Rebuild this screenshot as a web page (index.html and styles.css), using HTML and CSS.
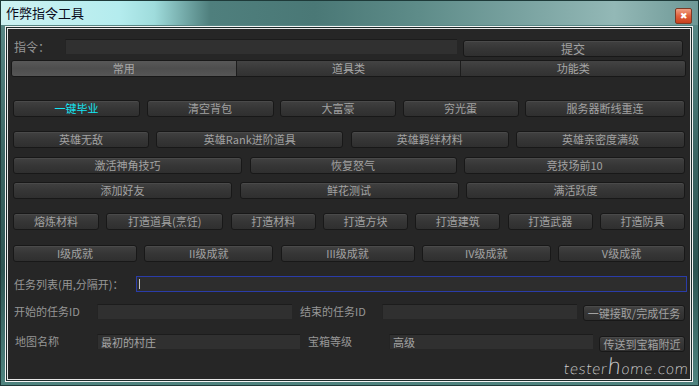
FILE: index.html
```html
<!DOCTYPE html>
<html>
<head>
    <title>作弊指令工具</title>
    <link rel="stylesheet" href="styles.css">
</head>
<body>
<div class="window">
    <div class="titlebar">
        <span class="title">作弊指令工具</span>
        <span class="close">&#x2716;</span>
    </div>
    <div class="frame">
        <div class="content">
            <div class="cmd-row">
                <label class="cmd-label">指令：</label>
                <div class="field cmd-input"></div>
                <button class="btn submit">提交</button>
            </div>

            <div class="tabs">
                <div class="tab active">常用</div>
                <div class="tab">道具类</div>
                <div class="tab">功能类</div>
            </div>

            <div class="btn-row row1">
                <button class="btn hot">一键毕业</button>
                <button class="btn">清空背包</button>
                <button class="btn">大富豪</button>
                <button class="btn">穷光蛋</button>
                <button class="btn">服务器断线重连</button>
            </div>
            <div class="btn-row row2">
                <button class="btn">英雄无敌</button>
                <button class="btn">英雄Rank进阶道具</button>
                <button class="btn">英雄羁绊材料</button>
                <button class="btn">英雄亲密度满级</button>
            </div>
            <div class="btn-row row3">
                <button class="btn">激活神角技巧</button>
                <button class="btn">恢复怒气</button>
                <button class="btn">竞技场前10</button>
            </div>
            <div class="btn-row row4">
                <button class="btn">添加好友</button>
                <button class="btn">鲜花测试</button>
                <button class="btn">满活跃度</button>
            </div>
            <div class="btn-row row5">
                <button class="btn">熔炼材料</button>
                <button class="btn">打造道具(烹饪)</button>
                <button class="btn">打造材料</button>
                <button class="btn">打造方块</button>
                <button class="btn">打造建筑</button>
                <button class="btn">打造武器</button>
                <button class="btn">打造防具</button>
            </div>
            <div class="btn-row row6">
                <button class="btn">I级成就</button>
                <button class="btn">II级成就</button>
                <button class="btn">III级成就</button>
                <button class="btn">IV级成就</button>
                <button class="btn">V级成就</button>
            </div>

            <div class="form-row task-row">
                <label class="lbl task-label">任务列表(用,分隔开)：</label>
                <div class="field task-input"><span class="caret"></span></div>
            </div>
            <div class="form-row id-row">
                <label class="lbl first">开始的任务ID</label>
                <div class="field id-input"></div>
                <label class="lbl second">结束的任务ID</label>
                <div class="field id-input"></div>
                <button class="btn small take">一键接取/完成任务</button>
            </div>
            <div class="form-row map-row">
                <label class="lbl first map-label">地图名称</label>
                <div class="field map-input">最初的村庄</div>
                <label class="lbl second">宝箱等级</label>
                <div class="field box-input">高级</div>
                <button class="btn small tele">传送到宝箱附近</button>
            </div>

            <div class="watermark">tester<span class="big-h">h</span>ome.com</div>
        </div>
    </div>
</div>
</body>
</html>
```

FILE: styles.css
```css
body {
    margin: 0;
    background: #2f5957;
    font-family: "Noto Sans CJK SC", "Noto Sans", sans-serif;
}

.window {
    width: 699px;
    height: 386px;
    box-sizing: border-box;
    border: 1px solid #1e3a39;
    background: linear-gradient(180deg, #5d8d8b 0%, #3c6664 40%, #2e5553 70%, #4f8480 100%);
    padding: 0 5px 0 4px;
    display: flex;
    flex-direction: column;
}

.titlebar {
    height: 24px;
    margin: 0 -5px 0 -4px;
    padding: 0 6px 0 5px;
    display: flex;
    align-items: center;
    justify-content: space-between;
    background: linear-gradient(90deg, #cdf2f2 0%, #b4ecee 17%, #9fdcdc 22%, #4f7f7d 30%, #4a7876 45%, #5e8c89 60%, #7aa3a1 75%, #93b8b6 88%, #6e9896 100%);
}

.title {
    font-size: 13px;
    color: #0a0a1a;
    margin-top: -1px;
}

.close {
    width: 17px;
    height: 16px;
    margin-top: 5px;
    box-sizing: border-box;
    border: 1px solid #7c3a26;
    border-radius: 2px;
    background: linear-gradient(180deg, #f0a084 0%, #e0603c 50%, #c8401c 100%);
    color: #fff;
    font-size: 9px;
    line-height: 14px;
    text-align: center;
}

.frame {
    margin-top: 1px;
    height: 356px;
    box-sizing: border-box;
    border: 1px solid #f4f4f4;
    padding: 1px;
    background: #1b2b2b;
}

.content {
    position: relative;
    height: 100%;
    box-sizing: border-box;
    border: 1px solid #e8e8e8;
    background: #262626;
    padding: 10px 0 0 4px;
    overflow: hidden;
    font-size: 11px;
    color: #969696;
}

.btn {
    font-family: inherit;
    font-size: 11px;
    color: #a2a2a2;
    height: 17px;
    padding: 0;
    line-height: 15px;
    box-sizing: border-box;
    border: 1px solid #181818;
    border-radius: 3px;
    background: linear-gradient(180deg, #414141 0%, #363636 50%, #2f2f2f 100%);
    box-shadow: inset 0 1px 0 #4a4a4a;
    white-space: nowrap;
}

.btn.hot {
    color: #14e6f4;
}

.field {
    height: 15px;
    box-sizing: border-box;
    background: #303030;
    border-top: 1px solid #1c1c1c;
    border-left: 1px solid #242424;
    color: #a4a4a4;
    font-size: 11px;
    line-height: 14px;
    padding-left: 3px;
}

.cmd-row {
    display: flex;
    align-items: flex-start;
    height: 18px;
}

.cmd-label {
    width: 53px;
    padding-left: 2px;
    box-sizing: border-box;
    line-height: 15px;
    font-size: 12px;
}

.cmd-input {
    width: 392px;
}

.submit {
    margin-left: 6px;
    margin-top: 1px;
    width: 220px;
    font-size: 12px;
}

.tabs {
    display: flex;
    margin: 3px 0 0 -1px;
    width: 675px;
    height: 17px;
    border-radius: 3px;
    overflow: hidden;
    border: 1px solid #181818;
    box-sizing: border-box;
}

.tab {
    flex: 1;
    text-align: center;
    font-size: 11px;
    line-height: 15px;
    color: #a8a8a8;
    background: linear-gradient(180deg, #444 0%, #393939 50%, #323232 100%);
    border-left: 1px solid #1d1d1d;
}

.tab.active {
    border-left: none;
    background: linear-gradient(180deg, #585858 0%, #4e4e4e 50%, #565656 100%);
}

.btn-row {
    display: grid;
    justify-content: space-between;
    width: 672px;
    margin-left: 1px;
}

.row1 { margin-top: 23px; grid-template-columns: 127px 127px 116px 116px 160px; }
.row2 { margin-top: 14px; grid-template-columns: 136px 187px 158px 169px; }
.row3 { margin-top: 9px; grid-template-columns: 229px 207px 221px; }
.row4 { margin-top: 8px; grid-template-columns: 219px 219px 219px; }
.row5 { margin-top: 14px; grid-template-columns: 86px 117px 85px 85px 85px 85px 85px; }
.row6 { margin-top: 15px; grid-template-columns: 124px 129px 134px 129px 127px; }

.form-row {
    display: flex;
    align-items: center;
    margin-left: 1px;
}

.lbl {
    box-sizing: border-box;
    white-space: nowrap;
    font-size: 11px;
}

.task-row {
    margin-top: 14px;
}

.task-label {
    width: 123px;
    padding-left: 1px;
}

.task-input {
    width: 551px;
    height: 16px;
    border: 1px solid #2a3ca8;
    background: #2d2d2d;
    padding: 2px 0 0 2px;
}

.caret {
    display: block;
    width: 1px;
    height: 10px;
    background: #c8c8c8;
}

.id-row {
    margin-top: 12px;
    align-items: flex-start;
}

.first {
    width: 84px;
    padding-left: 1px;
    line-height: 15px;
}

.map-label {
    padding-left: 2px;
}

.second {
    width: 90px;
    padding-left: 8px;
    line-height: 15px;
}

.id-input {
    width: 195px;
}

.take {
    margin-left: 6px;
    margin-top: 1px;
    width: 102px;
    height: 16px;
}

.map-row {
    margin-top: 13px;
    align-items: flex-start;
}

.map-input {
    width: 203px;
}

.box-input {
    width: 204px;
}

.map-row .second {
    width: 89px;
}

.tele {
    margin-left: 6px;
    margin-top: 2px;
    width: 86px;
    height: 16px;
}

.watermark {
    position: absolute;
    right: 1px;
    bottom: 1px;
    font-family: "DejaVu Sans", sans-serif;
    font-weight: 200;
    font-size: 14px;
    line-height: 18px;
    letter-spacing: 0.3px;
    color: #cfcfcf;
    transform: skewX(-6deg);
}

.big-h {
    font-size: 22px;
}
```
